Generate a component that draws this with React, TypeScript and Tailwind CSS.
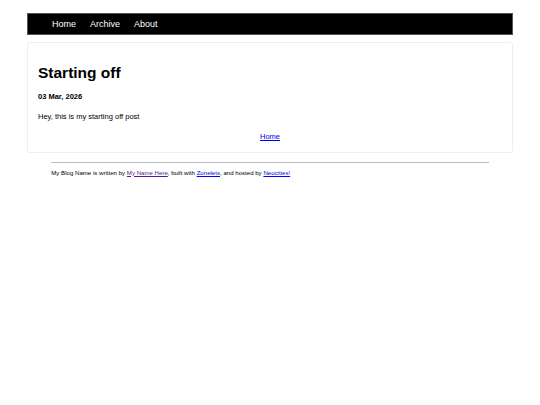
export default function App() {
  return (
    <div className="min-h-screen bg-white font-['Liberation_Sans',Arial,sans-serif] text-black">
      <div className="mx-auto w-[90%] pt-[13px]">
        {/* top nav */}
        <nav className="flex h-[22px] items-center gap-[14px] border border-[#555] bg-black pl-6 pt-[2px] text-[9px] text-white">
          <a href="#">Home</a>
          <a href="#">Archive</a>
          <a href="#">About</a>
        </nav>

        {/* post card */}
        <main className="mt-[7px] rounded-[3px] border border-[#eee] px-[10px] pt-[22px] pb-[11px]">
          <h1 className="text-[15.5px] font-bold leading-none">Starting off</h1>
          <h4 className="mt-[12px] text-[7.5px] font-bold leading-none">03 Mar, 2026</h4>
          <p className="mt-[13px] text-[7.5px] leading-none">Hey, this is my starting off post</p>
          <p className="mt-[12.5px] text-center text-[7.5px] leading-none">
            <a href="#" className="text-[#0000ee] underline">Home</a>
          </p>
        </main>

        {/* footer */}
        <footer className="mx-auto mt-[9px] w-[90%]">
          <hr className="border-t border-[#bbb]" />
          <p className="mt-[7px] text-[6.1px] leading-none">
            My Blog Name is written by{' '}
            <a href="#" className="text-[#551a8b] underline">My Name Here</a>, built with{' '}
            <a href="#" className="text-[#0000ee] underline">Zonelets</a>, and hosted by{' '}
            <a href="#" className="text-[#0000ee] underline">Neocities!</a>
          </p>
        </footer>
      </div>
    </div>
  );
}
